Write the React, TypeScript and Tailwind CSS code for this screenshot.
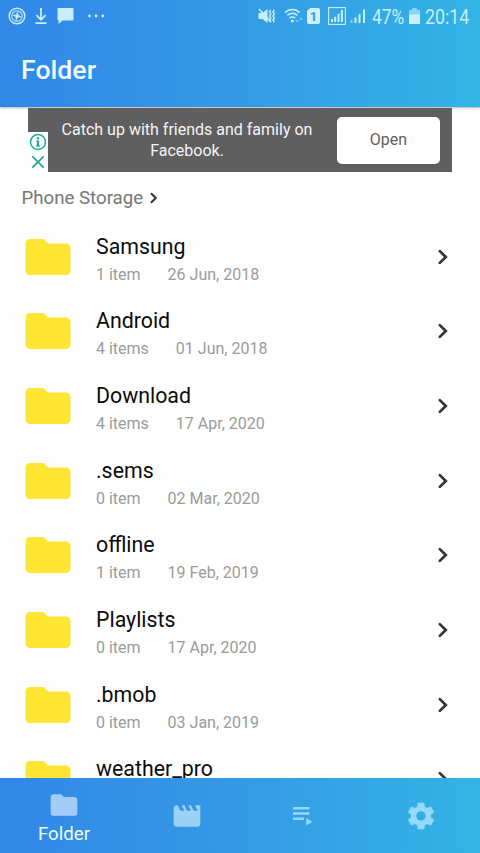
import type { ReactNode } from "react";

const FOLDER = "M10 4H4c-1.1 0-2 .9-2 2v12c0 1.1.9 2 2 2h16c1.1 0 2-.9 2-2V8c0-1.1-.9-2-2-2h-8l-2-2z";
const MOVIE = "M18 4l2 4h-3l-2-4h-2l2 4h-3l-2-4H8l2 4H7L5 4H4c-1.1 0-1.99.9-1.99 2L2 18c0 1.1.9 2 2 2h16c1.1 0 2-.9 2-2V4h-4z";
const GEAR =
  "M19.43 12.98c.04-.32.07-.64.07-.98s-.03-.66-.07-.98l2.11-1.65c.19-.15.24-.42.12-.64l-2-3.46c-.12-.22-.39-.3-.61-.22l-2.49 1c-.52-.4-1.08-.73-1.69-.98l-.38-2.65C14.46 2.18 14.25 2 14 2h-4c-.25 0-.46.18-.49.42l-.38 2.65c-.61.25-1.17.59-1.69.98l-2.49-1c-.23-.09-.49 0-.61.22l-2 3.46c-.13.22-.07.49.12.64l2.11 1.65c-.04.32-.07.65-.07.98s.03.66.07.98l-2.11 1.65c-.19.15-.24.42-.12.64l2 3.46c.12.22.39.3.61.22l2.49-1c.52.4 1.08.73 1.69.98l.38 2.65c.03.24.24.42.49.42h4c.25 0 .46-.18.49-.42l.38-2.65c.61-.25 1.17-.59 1.69-.98l2.49 1c.23.09.49 0 .61-.22l2-3.46c.12-.22.07-.49-.12-.64l-2.11-1.65zM12 15.5c-1.93 0-3.5-1.57-3.5-3.5s1.57-3.5 3.5-3.5 3.5 1.57 3.5 3.5-1.57 3.5-3.5 3.5z";

const folders = [
  { name: "Samsung", count: "1 item", date: "26 Jun, 2018" },
  { name: "Android", count: "4 items", date: "01 Jun, 2018" },
  { name: "Download", count: "4 items", date: "17 Apr, 2020" },
  { name: ".sems", count: "0 item", date: "02 Mar, 2020" },
  { name: "offline", count: "1 item", date: "19 Feb, 2019" },
  { name: "Playlists", count: "0 item", date: "17 Apr, 2020" },
  { name: ".bmob", count: "0 item", date: "03 Jan, 2019" },
  { name: "weather_pro" },
];

function StatusBar() {
  return (
    <div className="flex h-8 items-center text-[#c9effc]">
      <svg className="ml-2 h-[18px] w-[18px] shrink-0" viewBox="0 0 18 18" fill="none" stroke="currentColor">
        <circle cx="9" cy="9" r="7.8" strokeWidth="1.5" />
        <circle cx="9" cy="9" r="5.2" strokeWidth="1.3" opacity=".8" />
        <path d="M9 4l1.2 3.8L14 9l-3.8 1.2L9 14l-1.2-3.8L4 9l3.8-1.2z" transform="rotate(12 9 9)" fill="currentColor" stroke="none" />
      </svg>
      <svg className="ml-[9px] h-[18px] w-[12px] shrink-0" viewBox="0 0 12 18" fill="none" stroke="currentColor" strokeWidth="1.8">
        <path d="M6 1v11.5M1.4 8.2L6 12.8l4.6-4.6M.5 16.2h11" />
      </svg>
      <svg className="ml-[10px] h-[18px] w-[17px] shrink-0" viewBox="0 0 17 18" fill="currentColor">
        <path d="M1.5 1h14a1 1 0 011 1v10.5a1 1 0 01-1 1H5.5L1.6 17V13.5L.5 12.5V2a1 1 0 011-1z" />
      </svg>
      <svg className="ml-[13px] h-[6px] w-[20px] shrink-0" viewBox="0 0 20 6" fill="currentColor">
        <circle cx="2.5" cy="3" r="1.4" />
        <circle cx="9" cy="3" r="1.4" />
        <circle cx="15.8" cy="3" r="1.4" />
      </svg>
      <svg className="ml-[151px] h-[18px] w-[18px] shrink-0" viewBox="0 0 18 18" fill="none" stroke="currentColor">
        <path d="M.5 6h4l5-4v14l-5-4h-4z" fill="currentColor" stroke="none" />
        <path d="M1 2l12 13" strokeWidth="1.6" />
        <path d="M12.8 3l-1.3 2 1.3 2-1.3 2 1.3 2-1.3 2 1.3 2M16.3 3L15 5l1.3 2L15 9l1.3 2-1.3 2 1.3 2" strokeWidth="1.5" />
      </svg>
      <svg className="ml-[8px] h-[18px] w-[20px] shrink-0" viewBox="0 0 20 18" fill="none" stroke="currentColor" strokeWidth="1.6">
        <path d="M1 5.6c4.2-4.2 10.5-4.2 14.7 0M3.3 8.5c3-2.8 7.2-2.8 10.2 0M5.6 11.2c1.7-1.5 3.9-1.5 5.6 0" />
        <circle cx="8.4" cy="14" r="1.5" fill="currentColor" stroke="none" />
        <path d="M11.2 13h3.6L13 15.8zM15.2 12.7h3.6L17 9.8z" fill="currentColor" stroke="none" opacity=".5" />
      </svg>
      <div className="ml-[3px] flex h-4 w-[13px] shrink-0 items-center justify-center rounded-[2px] bg-[#d0f1fc] text-[13px] font-bold leading-none text-[#289bd8] [clip-path:polygon(25%_0,100%_0,100%_100%,0_100%,0_18%)]">
        1
      </div>
      <svg className="ml-[8px] h-[18px] w-[18px] shrink-0" viewBox="0 0 18 18" fill="none" stroke="currentColor">
        <rect x=".6" y=".6" width="16.8" height="16.8" strokeWidth="1.1" />
        <path d="M4 15v-3M7.2 15V9.7M10.5 15V6.8M13.9 15V3" strokeWidth="2" />
      </svg>
      <svg className="ml-[4px] h-[18px] w-[16px] shrink-0" viewBox="0 0 16 18" fill="none" stroke="currentColor" strokeWidth="2">
        <path d="M1.5 16v-3" opacity=".6" />
        <path d="M5.5 16v-5.5M9.5 16V7M14 16V2.5" />
      </svg>
      <div className="ml-[6px] w-[33px] shrink-0">
        <span className="block origin-left scale-x-[.865] whitespace-nowrap pt-px text-[20px] leading-8">47%</span>
      </div>
      <svg className="ml-[4px] h-[16px] w-[11px] shrink-0" viewBox="0 0 11 16" fill="currentColor">
        <path d="M3.3 0h4.4v1.8H10a1 1 0 011 1V7H0V2.8a1 1 0 011-1h2.3z" opacity=".6" />
        <path d="M0 6.5h11V15a1 1 0 01-1 1H1a1 1 0 01-1-1z" />
      </svg>
      <div className="ml-[5px] w-[44px] shrink-0">
        <span className="block origin-left scale-x-[.89] whitespace-nowrap pt-px text-[20px] leading-8">20:14</span>
      </div>
    </div>
  );
}

function AdBanner() {
  return (
    <div className="ml-[28px] mt-px flex h-16 w-[424px] items-center bg-[#5f5f5f]">
      <div className="flex h-[40px] w-5 shrink-0 flex-col items-center self-end bg-white">
        <svg className="mt-[1px] h-[18px] w-[18px]" viewBox="0 0 18 18" fill="none" stroke="#1fa79d">
          <circle cx="9" cy="9" r="7.5" strokeWidth="1.5" />
          <path d="M9 7.6v5.9" strokeWidth="2.2" />
          <path d="M7.2 8.1h2M7 13h4" strokeWidth="1" />
          <circle cx="9" cy="5.2" r="1.2" fill="#1fa79d" stroke="none" />
        </svg>
        <svg className="mt-[4px] h-[14px] w-[14px]" viewBox="0 0 14 14" stroke="#1fa79d" strokeWidth="1.7">
          <path d="M1.3 1.3l11.4 11.4M12.7 1.3L1.3 12.7" />
        </svg>
      </div>
      <p className="w-[278px] shrink-0 text-center text-[16px] leading-[21px] text-[#f4f4f4]">
        Catch up with friends and family on
        <br />
        Facebook.
      </p>
      <button className="ml-[11px] h-[47px] w-[103px] rounded-[5px] bg-white text-[16px] text-[#606060]">Open</button>
    </div>
  );
}

function FolderRow({ name, count, date }: { name: string; count?: string; date?: string }) {
  return (
    <li className="flex h-[74.67px] items-center">
      <svg className="ml-[21px] h-[54px] w-[54px] shrink-0" viewBox="0 0 24 24" fill="#ffe534">
        <path d={FOLDER} />
      </svg>
      <div className="ml-[21px] h-[56px] flex-1 translate-y-[4px]">
        <div className="text-[21.33px] leading-[28px] text-[#0c0c0c]">{name}</div>
        {count && (
          <div className="flex gap-[27px] text-[16px] leading-[28px] text-[#9b9b9b]">
            <span>{count}</span>
            <span>{date}</span>
          </div>
        )}
      </div>
      <svg className="mr-[31px] h-4 w-3 shrink-0" viewBox="0 0 12 16" fill="none" stroke="#333" strokeWidth="2.7" strokeLinecap="round">
        <path d="M2.8 2.1L8.8 8l-6 5.9" />
      </svg>
    </li>
  );
}

function Tab({ label, children, className }: { label?: string; children: ReactNode; className: string }) {
  return (
    <button className={`flex h-full shrink-0 flex-col items-center ${className}`}>
      {children}
      {label && <span className="pt-px text-[18.67px] leading-6 text-[#effcff]">{label}</span>}
    </button>
  );
}

export default function App() {
  return (
    <div className="flex h-[853px] w-[480px] flex-col overflow-hidden bg-[#fefefe] font-[Roboto,sans-serif]">
      <header className="h-[107px] shrink-0 bg-linear-to-r from-[#3187e8] via-[#359ae5] to-[#32b4e5] shadow-[0_1px_2px_rgba(0,0,0,.3)]">
        <StatusBar />
        <h1 className="ml-[21px] mt-[22px] text-[26.67px] font-medium leading-8 text-[#effcff]">Folder</h1>
      </header>
      <main className="min-h-0 flex-1 overflow-hidden">
        <AdBanner />
        <div className="ml-[21.5px] flex h-[47.3px] items-center pt-[4px] text-[18.67px] text-[#777]">
          Phone Storage
          <svg className="ml-[6px] h-3 w-[10px]" viewBox="0 0 10 12" fill="none" stroke="#333" strokeWidth="2" strokeLinecap="round">
            <path d="M2.5 1.8L6.8 6l-4.3 4.2" />
          </svg>
        </div>
        <ul>
          {folders.map((folder) => (
            <FolderRow key={folder.name} {...folder} />
          ))}
        </ul>
      </main>
      <nav className="flex h-[75px] shrink-0 bg-linear-to-r from-[#3187e8] via-[#359ae5] to-[#32b4e5]">
        <Tab label="Folder" className="w-[128px] pt-[11px]">
          <svg className="h-8 w-8" viewBox="0 0 24 24" fill="#a3ccf6">
            <path d={FOLDER} />
          </svg>
        </Tab>
        <Tab className="w-[117px] pt-[21.5px]">
          <svg className="h-8 w-8" viewBox="0 0 24 24" fill="#9dd0f6">
            <path d={MOVIE} />
          </svg>
        </Tab>
        <Tab className="w-[116px] pt-[28px]">
          <svg className="h-5 w-5" viewBox="0 0 20 20" fill="#94d9fb">
            <path d="M0 1h16.5v2.4H0zM0 6.3h16.5v2.4H0zM0 11.6h11v2.4H0zM13.3 12v7.4l6.2-3.7z" />
          </svg>
        </Tab>
        <Tab className="w-[119px] pt-[21.5px]">
          <svg className="h-8 w-8" viewBox="0 0 24 24" fill="#94d9fb">
            <path d={GEAR} />
          </svg>
        </Tab>
      </nav>
    </div>
  );
}
